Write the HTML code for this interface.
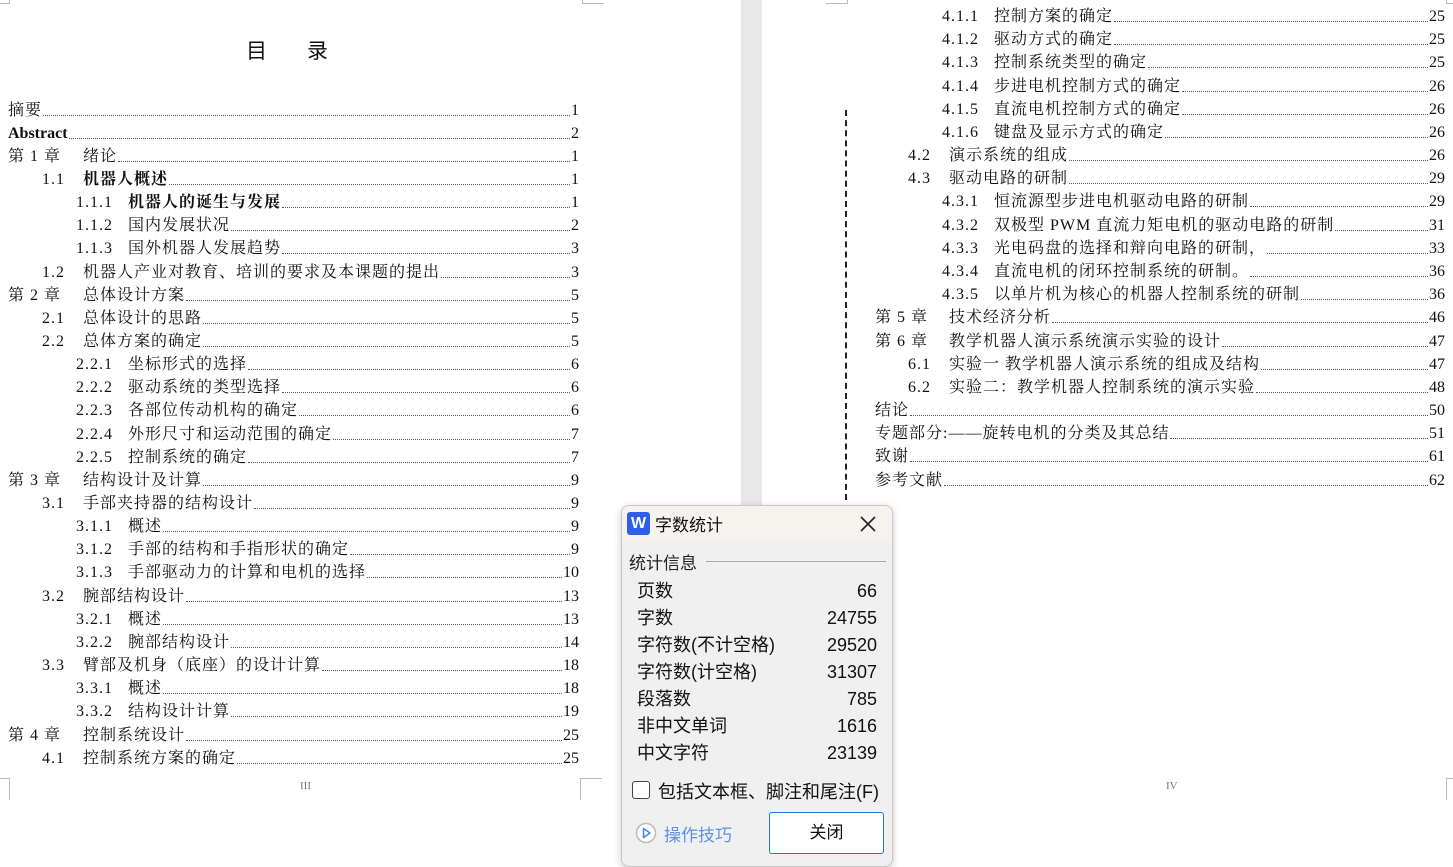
<!DOCTYPE html>
<html><head><meta charset="utf-8"><style>
*{margin:0;padding:0;box-sizing:border-box}
body{width:1453px;height:861px;position:relative;overflow:hidden;background:#fff;font-family:"Liberation Serif","Noto Serif CJK SC",serif;color:#111}
.gap{position:absolute;left:741px;top:0;width:21px;height:861px;background:#e8e8e8}
.r{position:absolute;display:flex;align-items:flex-end;font-size:16px;letter-spacing:1px;line-height:18px;height:18px;white-space:nowrap;margin-top:2px}
.r .d{flex:1;border-bottom:1px dotted #555;margin:0 1px 4px 1px}
.r span:last-child{letter-spacing:0}
.b{font-weight:bold}
.cm{position:absolute;border-color:#bbb;border-style:solid;width:22px;height:22px}
.ui{font-family:"Liberation Sans","Noto Sans CJK SC",sans-serif}
</style></head><body>
<div class="gap"></div>
<div style="position:absolute;left:246px;top:35px;font-size:21px;font-family:'Noto Sans CJK SC',sans-serif;letter-spacing:40px">目录</div>

<div class="cm" style="left:-12px;top:-18px;border-width:0 1px 1px 0"></div>
<div class="cm" style="left:582px;top:-18px;border-width:0 0 1px 1px"></div>
<div class="cm" style="left:-12px;top:778px;border-width:1px 1px 0 0"></div>
<div class="cm" style="left:580px;top:778px;border-width:1px 0 0 1px"></div>
<div class="cm" style="left:826px;top:-18px;border-width:0 1px 1px 0"></div>
<div class="cm" style="left:1446px;top:-18px;border-width:0 0 1px 1px"></div>
<div class="cm" style="left:826px;top:778px;border-width:1px 1px 0 0"></div>
<div class="cm" style="left:1446px;top:778px;border-width:1px 0 0 1px"></div>
<div style="position:absolute;left:300px;top:780px;font-size:11px;color:#777">III</div>
<div style="position:absolute;left:1166px;top:780px;font-size:11px;color:#777">IV</div>
<div style="position:absolute;left:845px;top:110px;height:390px;border-left:2px dashed #222"></div>

<div class="r" style="left:8px;top:100px;width:571px"><span>摘要</span><span class="d"></span><span>1</span></div>
<div class="r" style="left:8px;top:123px;width:571px"><span class="b" style="letter-spacing:0">Abstract</span><span class="d"></span><span>2</span></div>
<div class="r" style="left:8px;top:146px;width:571px"><span style="width:75px">第 1 章</span><span>绪论</span><span class="d"></span><span>1</span></div>
<div class="r b" style="left:42px;top:169px;width:537px"><span style="width:41px;font-weight:normal">1.1</span><span>机器人概述</span><span class="d"></span><span style="font-weight:normal">1</span></div>
<div class="r b" style="left:76px;top:192px;width:503px"><span style="width:52px;font-weight:normal">1.1.1</span><span>机器人的诞生与发展</span><span class="d"></span><span style="font-weight:normal">1</span></div>
<div class="r" style="left:76px;top:215px;width:503px"><span style="width:52px">1.1.2</span><span>国内发展状况</span><span class="d"></span><span>2</span></div>
<div class="r" style="left:76px;top:238px;width:503px"><span style="width:52px">1.1.3</span><span>国外机器人发展趋势</span><span class="d"></span><span>3</span></div>
<div class="r" style="left:42px;top:262px;width:537px"><span style="width:41px">1.2</span><span>机器人产业对教育、培训的要求及本课题的提出</span><span class="d"></span><span>3</span></div>
<div class="r" style="left:8px;top:285px;width:571px"><span style="width:75px">第 2 章</span><span>总体设计方案</span><span class="d"></span><span>5</span></div>
<div class="r" style="left:42px;top:308px;width:537px"><span style="width:41px">2.1</span><span>总体设计的思路</span><span class="d"></span><span>5</span></div>
<div class="r" style="left:42px;top:331px;width:537px"><span style="width:41px">2.2</span><span>总体方案的确定</span><span class="d"></span><span>5</span></div>
<div class="r" style="left:76px;top:354px;width:503px"><span style="width:52px">2.2.1</span><span>坐标形式的选择</span><span class="d"></span><span>6</span></div>
<div class="r" style="left:76px;top:377px;width:503px"><span style="width:52px">2.2.2</span><span>驱动系统的类型选择</span><span class="d"></span><span>6</span></div>
<div class="r" style="left:76px;top:400px;width:503px"><span style="width:52px">2.2.3</span><span>各部位传动机构的确定</span><span class="d"></span><span>6</span></div>
<div class="r" style="left:76px;top:424px;width:503px"><span style="width:52px">2.2.4</span><span>外形尺寸和运动范围的确定</span><span class="d"></span><span>7</span></div>
<div class="r" style="left:76px;top:447px;width:503px"><span style="width:52px">2.2.5</span><span>控制系统的确定</span><span class="d"></span><span>7</span></div>
<div class="r" style="left:8px;top:470px;width:571px"><span style="width:75px">第 3 章</span><span>结构设计及计算</span><span class="d"></span><span>9</span></div>
<div class="r" style="left:42px;top:493px;width:537px"><span style="width:41px">3.1</span><span>手部夹持器的结构设计</span><span class="d"></span><span>9</span></div>
<div class="r" style="left:76px;top:516px;width:503px"><span style="width:52px">3.1.1</span><span>概述</span><span class="d"></span><span>9</span></div>
<div class="r" style="left:76px;top:539px;width:503px"><span style="width:52px">3.1.2</span><span>手部的结构和手指形状的确定</span><span class="d"></span><span>9</span></div>
<div class="r" style="left:76px;top:562px;width:503px"><span style="width:52px">3.1.3</span><span>手部驱动力的计算和电机的选择</span><span class="d"></span><span>10</span></div>
<div class="r" style="left:42px;top:586px;width:537px"><span style="width:41px">3.2</span><span>腕部结构设计</span><span class="d"></span><span>13</span></div>
<div class="r" style="left:76px;top:609px;width:503px"><span style="width:52px">3.2.1</span><span>概述</span><span class="d"></span><span>13</span></div>
<div class="r" style="left:76px;top:632px;width:503px"><span style="width:52px">3.2.2</span><span>腕部结构设计</span><span class="d"></span><span>14</span></div>
<div class="r" style="left:42px;top:655px;width:537px"><span style="width:41px">3.3</span><span>臂部及机身（底座）的设计计算</span><span class="d"></span><span>18</span></div>
<div class="r" style="left:76px;top:678px;width:503px"><span style="width:52px">3.3.1</span><span>概述</span><span class="d"></span><span>18</span></div>
<div class="r" style="left:76px;top:701px;width:503px"><span style="width:52px">3.3.2</span><span>结构设计计算</span><span class="d"></span><span>19</span></div>
<div class="r" style="left:8px;top:725px;width:571px"><span style="width:75px">第 4 章</span><span>控制系统设计</span><span class="d"></span><span>25</span></div>
<div class="r" style="left:42px;top:748px;width:537px"><span style="width:41px">4.1</span><span>控制系统方案的确定</span><span class="d"></span><span>25</span></div>

<div class="r" style="left:942px;top:6px;width:503px"><span style="width:52px">4.1.1</span><span>控制方案的确定</span><span class="d"></span><span>25</span></div>
<div class="r" style="left:942px;top:29px;width:503px"><span style="width:52px">4.1.2</span><span>驱动方式的确定</span><span class="d"></span><span>25</span></div>
<div class="r" style="left:942px;top:52px;width:503px"><span style="width:52px">4.1.3</span><span>控制系统类型的确定</span><span class="d"></span><span>25</span></div>
<div class="r" style="left:942px;top:76px;width:503px"><span style="width:52px">4.1.4</span><span>步进电机控制方式的确定</span><span class="d"></span><span>26</span></div>
<div class="r" style="left:942px;top:99px;width:503px"><span style="width:52px">4.1.5</span><span>直流电机控制方式的确定</span><span class="d"></span><span>26</span></div>
<div class="r" style="left:942px;top:122px;width:503px"><span style="width:52px">4.1.6</span><span>键盘及显示方式的确定</span><span class="d"></span><span>26</span></div>
<div class="r" style="left:908px;top:145px;width:537px"><span style="width:41px">4.2</span><span>演示系统的组成</span><span class="d"></span><span>26</span></div>
<div class="r" style="left:908px;top:168px;width:537px"><span style="width:41px">4.3</span><span>驱动电路的研制</span><span class="d"></span><span>29</span></div>
<div class="r" style="left:942px;top:191px;width:503px"><span style="width:52px">4.3.1</span><span>恒流源型步进电机驱动电路的研制</span><span class="d"></span><span>29</span></div>
<div class="r" style="left:942px;top:215px;width:503px"><span style="width:52px">4.3.2</span><span>双极型 PWM 直流力矩电机的驱动电路的研制</span><span class="d"></span><span>31</span></div>
<div class="r" style="left:942px;top:238px;width:503px"><span style="width:52px">4.3.3</span><span>光电码盘的选择和辩向电路的研制，</span><span class="d"></span><span>33</span></div>
<div class="r" style="left:942px;top:261px;width:503px"><span style="width:52px">4.3.4</span><span>直流电机的闭环控制系统的研制。</span><span class="d"></span><span>36</span></div>
<div class="r" style="left:942px;top:284px;width:503px"><span style="width:52px">4.3.5</span><span>以单片机为核心的机器人控制系统的研制</span><span class="d"></span><span>36</span></div>
<div class="r" style="left:875px;top:307px;width:570px"><span style="width:74px">第 5 章</span><span>技术经济分析</span><span class="d"></span><span>46</span></div>
<div class="r" style="left:875px;top:331px;width:570px"><span style="width:74px">第 6 章</span><span>教学机器人演示系统演示实验的设计</span><span class="d"></span><span>47</span></div>
<div class="r" style="left:908px;top:354px;width:537px"><span style="width:41px">6.1</span><span>实验一 教学机器人演示系统的组成及结构</span><span class="d"></span><span>47</span></div>
<div class="r" style="left:908px;top:377px;width:537px"><span style="width:41px">6.2</span><span>实验二：教学机器人控制系统的演示实验</span><span class="d"></span><span>48</span></div>
<div class="r" style="left:875px;top:400px;width:570px"><span>结论</span><span class="d"></span><span>50</span></div>
<div class="r" style="left:875px;top:423px;width:570px"><span>专题部分:——旋转电机的分类及其总结</span><span class="d"></span><span>51</span></div>
<div class="r" style="left:875px;top:446px;width:570px"><span>致谢</span><span class="d"></span><span>61</span></div>
<div class="r" style="left:875px;top:470px;width:570px"><span>参考文献</span><span class="d"></span><span>62</span></div>

<div class="ui" style="position:absolute;left:621px;top:505px;width:272px;height:362px;background:#f0f0f0;border:1px solid #c8c8c8;border-radius:8px;box-shadow:0 2px 8px rgba(0,0,0,.2);overflow:hidden">
  <div style="height:36px;background:#f6f3ef;position:relative">
    <div style="position:absolute;left:5px;top:6px;width:23px;height:23px;background:#2f5ee8;border-radius:3px;color:#fff;font-weight:bold;font-size:16px;text-align:center;line-height:23px">W</div>
    <div style="position:absolute;left:33px;top:5px;font-size:17px;color:#111">字数统计</div>
    <svg style="position:absolute;left:238px;top:10px" width="16" height="16" viewBox="0 0 16 16"><path d="M1 1L15 15M15 1L1 15" stroke="#222" stroke-width="1.6"/></svg>
  </div>
  <div style="position:absolute;left:7px;top:43px;font-size:17px;color:#222">统计信息</div>
  <div style="position:absolute;left:84px;top:55px;width:180px;border-top:1px solid #aaa"></div>
  <div style="position:absolute;left:15px;top:72px;width:240px;font-size:18px;line-height:27px;color:#111">
    <div style="display:flex;justify-content:space-between"><span>页数</span><span>66</span></div>
    <div style="display:flex;justify-content:space-between"><span>字数</span><span>24755</span></div>
    <div style="display:flex;justify-content:space-between"><span>字符数(不计空格)</span><span>29520</span></div>
    <div style="display:flex;justify-content:space-between"><span>字符数(计空格)</span><span>31307</span></div>
    <div style="display:flex;justify-content:space-between"><span>段落数</span><span>785</span></div>
    <div style="display:flex;justify-content:space-between"><span>非中文单词</span><span>1616</span></div>
    <div style="display:flex;justify-content:space-between"><span>中文字符</span><span>23139</span></div>
  </div>
  <div style="position:absolute;left:10px;top:275px;width:18px;height:18px;border:1.5px solid #444;border-radius:3px;background:#fff"></div>
  <div style="position:absolute;left:36px;top:272px;font-size:18px;color:#111">包括文本框、脚注和尾注(F)</div>
  <svg style="position:absolute;left:13px;top:316px" width="22" height="22" viewBox="0 0 22 22"><circle cx="11" cy="11" r="9.5" fill="#fff" stroke="#bbb" stroke-width="1.5"/><path d="M8.5 6.5L15 11L8.5 15.5Z" fill="none" stroke="#4a86e0" stroke-width="1.6" stroke-linejoin="round"/></svg>
  <div style="position:absolute;left:42px;top:315px;font-size:17px;color:#5b91e6">操作技巧</div>
  <div style="position:absolute;left:147px;top:306px;width:115px;height:42px;border:1px solid #2f6fd8;border-radius:3px;background:#fff;font-size:17px;text-align:center;line-height:40px;color:#111">关闭</div>
</div>
</body></html>
